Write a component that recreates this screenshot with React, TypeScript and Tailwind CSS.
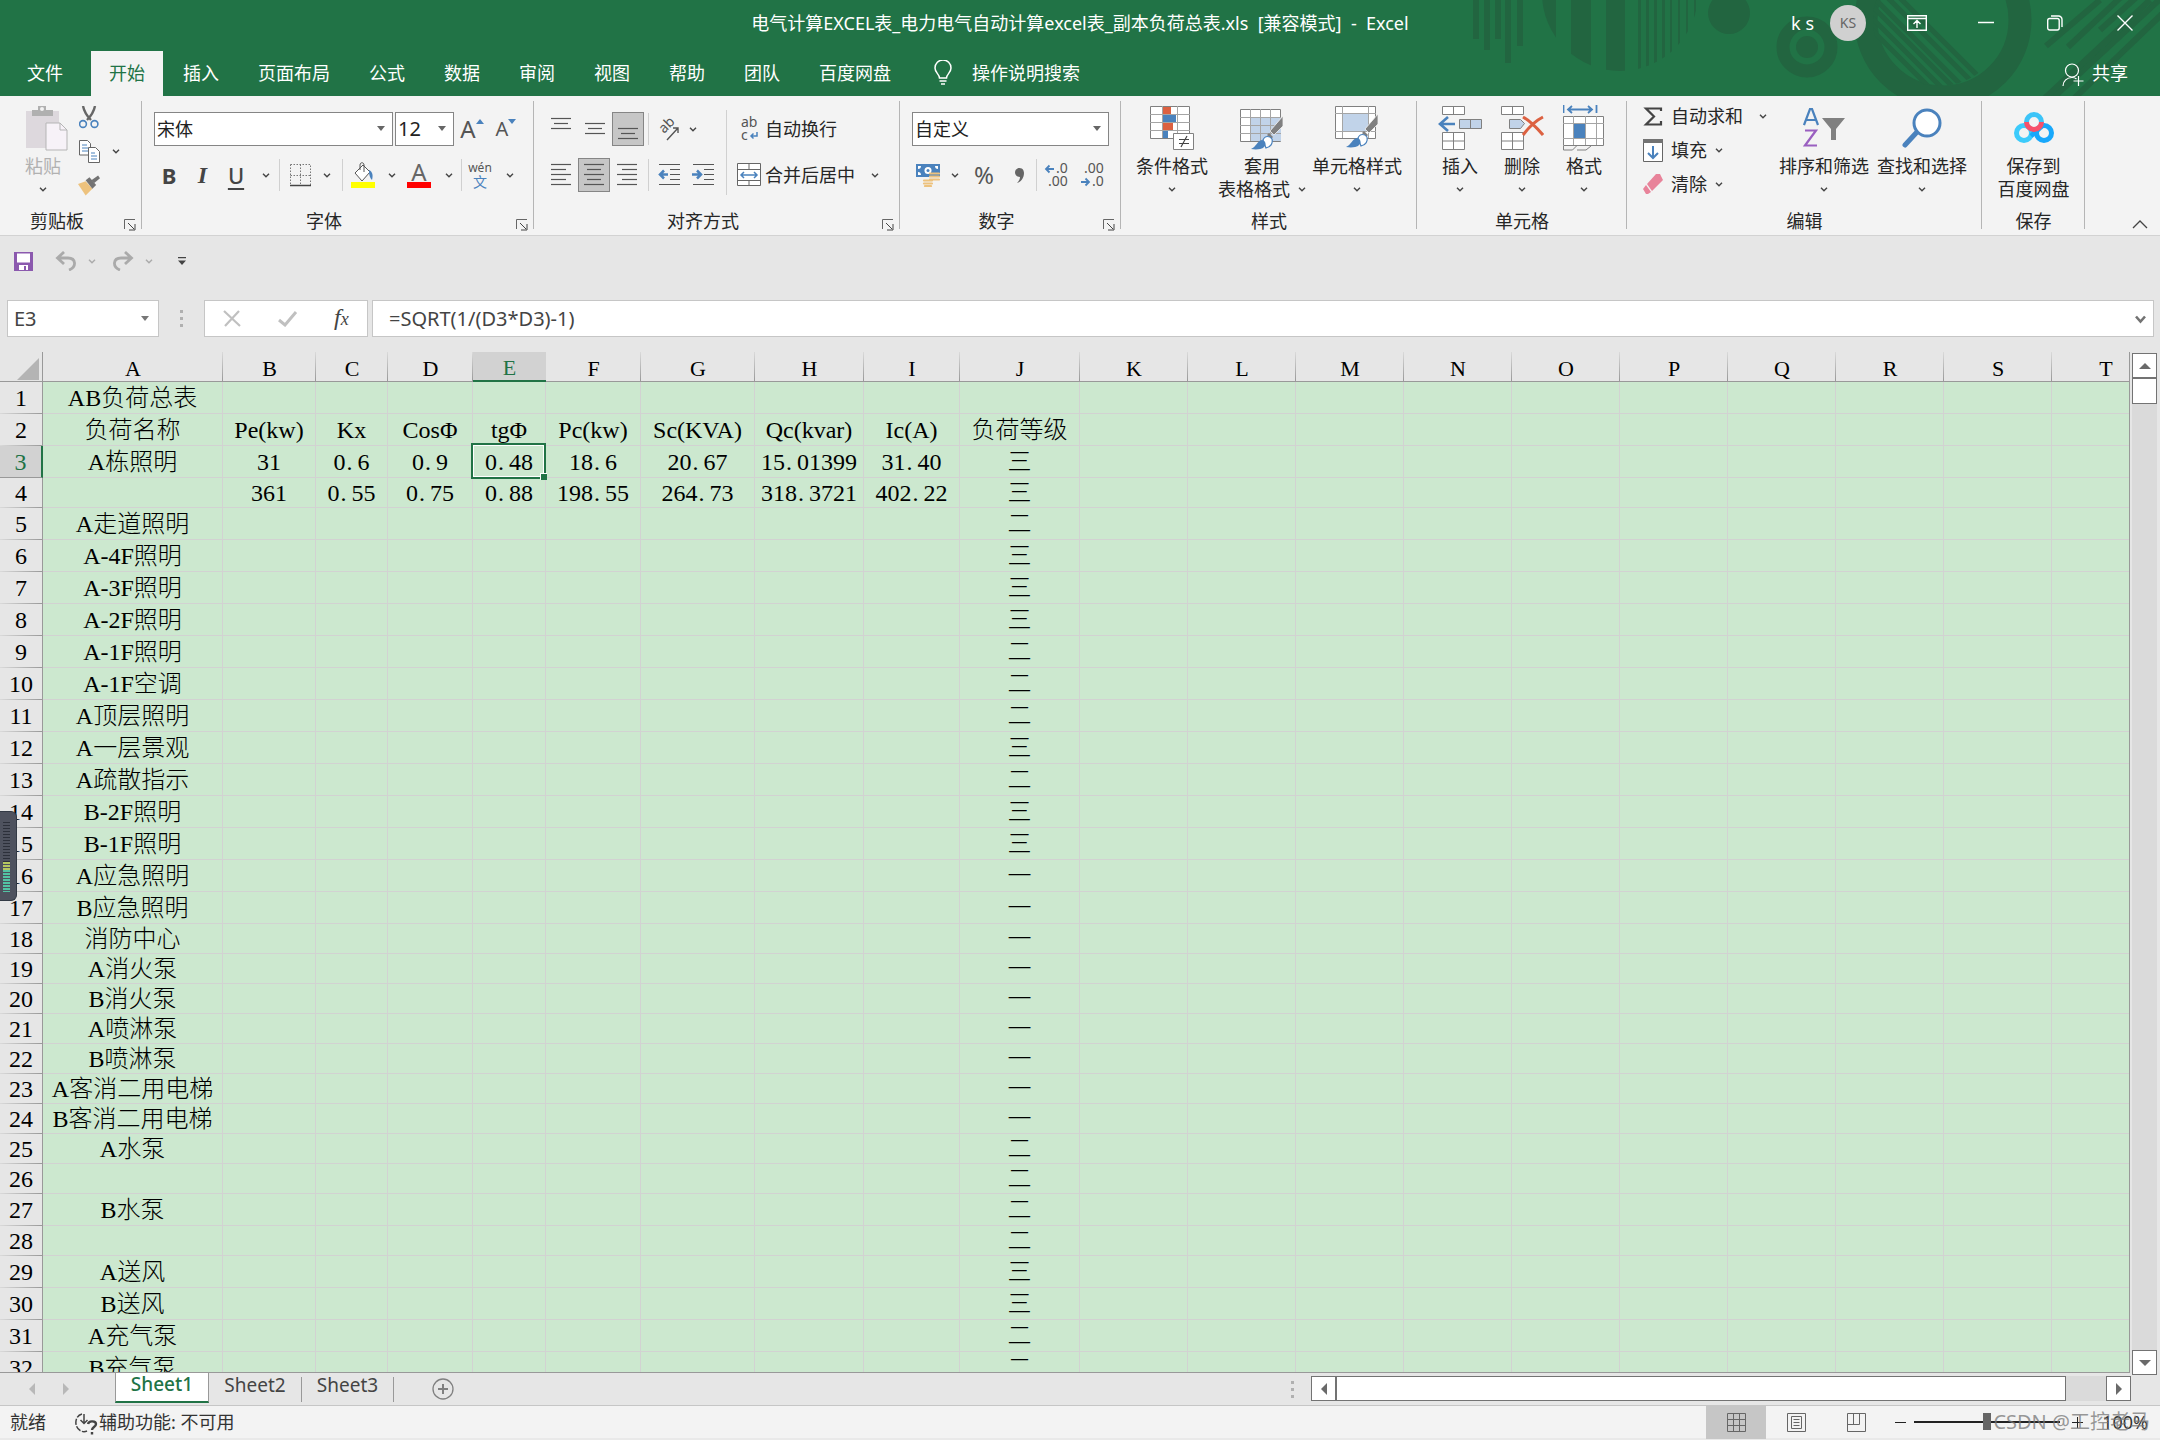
import type { ReactNode } from "react";

const tabs = ["插入", "页面布局", "公式", "数据", "审阅", "视图", "帮助", "团队", "百度网盘"];

const columns = [
  { name: "A", width: 180 },
  { name: "B", width: 93 },
  { name: "C", width: 72 },
  { name: "D", width: 85 },
  { name: "E", width: 73 },
  { name: "F", width: 95 },
  { name: "G", width: 114 },
  { name: "H", width: 109 },
  { name: "I", width: 96 },
  { name: "J", width: 120 },
  ...["K", "L", "M", "N", "O", "P", "Q", "R", "S", "T"].map((name) => ({ name, width: 108 })),
];

type Row = { name: string; values?: string[]; level?: string; short?: boolean };

const rows: Row[] = [
  { name: "AB负荷总表" },
  { name: "负荷名称", values: ["Pe(kw)", "Kx", "CosΦ", "tgΦ", "Pc(kw)", "Sc(KVA)", "Qc(kvar)", "Ic(A)"], level: "负荷等级" },
  { name: "A栋照明", values: ["31", "0.6", "0.9", "0.48", "18.6", "20.67", "15.01399", "31.40"], level: "三" },
  { name: "", values: ["361", "0.55", "0.75", "0.88", "198.55", "264.73", "318.3721", "402.22"], level: "三", short: true },
  { name: "A走道照明", level: "二" },
  { name: "A-4F照明", level: "三" },
  { name: "A-3F照明", level: "三" },
  { name: "A-2F照明", level: "三" },
  { name: "A-1F照明", level: "二" },
  { name: "A-1F空调", level: "二" },
  { name: "A顶层照明", level: "二" },
  { name: "A一层景观", level: "三" },
  { name: "A疏散指示", level: "二" },
  { name: "B-2F照明", level: "三" },
  { name: "B-1F照明", level: "三" },
  { name: "A应急照明", level: "一" },
  { name: "B应急照明", level: "一" },
  { name: "消防中心", level: "一", short: true },
  { name: "A消火泵", level: "一", short: true },
  { name: "B消火泵", level: "一", short: true },
  { name: "A喷淋泵", level: "一", short: true },
  { name: "B喷淋泵", level: "一", short: true },
  { name: "A客消二用电梯", level: "一", short: true },
  { name: "B客消二用电梯", level: "一", short: true },
  { name: "A水泵", level: "二", short: true },
  { name: "", level: "二", short: true },
  { name: "B水泵", level: "二" },
  { name: "", level: "二", short: true },
  { name: "A送风", level: "三" },
  { name: "B送风", level: "三" },
  { name: "A充气泵", level: "二" },
  { name: "B充气泵", level: "二" },
];

function Chevron({ className = "text-[#444]" }: { className?: string }) {
  return (
    <svg className={className} width="8" height="5" viewBox="0 0 8 5" fill="none" stroke="currentColor" strokeWidth="1.4">
      <path d="M1 .8 4 3.8 7 .8" />
    </svg>
  );
}

function Btn({ label, className, children }: { label: string; className: string; children: ReactNode }) {
  return (
    <button type="button" aria-label={label} className={`flex h-[34px] shrink-0 items-center justify-center ${className}`}>
      {children}
    </button>
  );
}

function Divider() {
  return <div className="h-8 w-px shrink-0 bg-[#d0d0d0]" />;
}

function Group({ label, className, launcher, children }: { label: string; className: string; launcher?: boolean; children: ReactNode }) {
  return (
    <section className={`relative flex shrink-0 flex-col ${className}`}>
      <div className="flex h-28 flex-col">{children}</div>
      <div className={launcher ? "flex h-[26px] items-center justify-center pr-7" : "flex h-[26px] items-center justify-center"}>
        <span>{label}</span>
        {launcher && (
          <button type="button" aria-label={`${label}设置`} className="absolute right-[6px] bottom-1">
            <svg width="12" height="12" viewBox="0 0 12 12" fill="none" stroke="#666">
              <path d="M.5 10V.5H11" />
              <path d="M4 4 10 10M11 5v6H5" stroke="#444" />
            </svg>
          </button>
        )}
      </div>
      <div className="absolute top-[5px] right-0 h-32 w-px bg-[#b5b5b5]" />
    </section>
  );
}

function BigButton({ icon, lines, className, arrow = true }: { icon: ReactNode; lines: string[]; className: string; arrow?: boolean }) {
  return (
    <button type="button" className={`flex shrink-0 flex-col items-center pt-2 ${className}`}>
      <span className="flex h-12 items-center justify-center">{icon}</span>
      <span className="mt-[2px] leading-6 whitespace-nowrap">{lines[0]}</span>
      <span className="flex h-[22px] items-center gap-2 leading-[22px] whitespace-nowrap">
        {lines[1]}
        {arrow && <Chevron />}
      </span>
    </button>
  );
}

function Picker({ label, value, className }: { label: string; value: string; className: string }) {
  return (
    <div className={`relative h-[34px] shrink-0 ${className}`}>
      <select aria-label={label} className="h-full w-full appearance-none border border-[#858585] bg-white pl-[2px] text-[#222]">
        <option>{value}</option>
      </select>
      <svg className="pointer-events-none absolute top-[14px] right-2" width="8" height="5" viewBox="0 0 8 5" fill="#666">
        <path d="M0 0h8L4 5z" />
      </svg>
    </div>
  );
}

function Lines({ rows: list }: { rows: [number, number, number][] }) {
  return (
    <svg width="22" height="24" viewBox="0 0 22 24" stroke="#555" strokeWidth="1.2">
      {list.map(([y, x1, x2]) => (
        <path key={y} d={`M${x1} ${y}.5H${x2}`} />
      ))}
    </svg>
  );
}

function Brush() {
  return (
    <g>
      <path d="M43 10v10L34 29l-4-4z" fill="#808080" stroke="#f3f3f3" strokeWidth=".8" />
      <path d="M29 27l4 4-2 2-4-4z" fill="#808080" />
      <path d="M23 34c2-5 7-4 9-1 1 4-1 8-6 9z" fill="#fff" stroke="#4a82bd" strokeWidth="1.2" />
      <path d="M11 43c5-2 6-8 11-9 4 1 5 5 1 8-2 1-6 2-12 1z" fill="#4a82bd" />
    </g>
  );
}

function TitleArt() {
  const stripes: [number, number][] = [[100, 16], [131, 20], [166, 19], [198, 3], [206, 3], [214, 3], [222, 3], [230, 2], [238, 2], [246, 2], [254, 2]];
  return (
    <svg className="absolute top-0 right-0" width="720" height="96" viewBox="0 0 720 96" fill="#226540">
      <clipPath id="disc">
        <circle cx="180" cy="-7" r="78" />
      </clipPath>
      <clipPath id="hole">
        <circle cx="499" cy="20" r="66" />
      </clipPath>
      <path d="M33 0h6v39h-6zM44 0h6v50h-6zM55 0h6v39h-6zM65 0h6v63h-6zM77 0h6v46h-6z" />
      <g clipPath="url(#disc)">
        {stripes.map(([x, w]) => (
          <rect key={x} x={x} y="0" width={w} height="80" />
        ))}
      </g>
      <circle cx="289" cy="13" r="21" />
      <circle cx="367" cy="47" r="24" fill="none" stroke="#226540" strokeWidth="13" />
      <circle cx="367" cy="47" r="11" />
      <circle cx="503" cy="20" r="77" fill="none" stroke="#226540" strokeWidth="23" />
      <g clipPath="url(#hole)" stroke="#226540" strokeWidth="5">
        <path d="M430-6 530 94M418-8 518 92M406-8 506 92M442-8 542 92M454-8 554 92M394-8 494 92" />
      </g>
      <g stroke="#226540" strokeWidth="6">
        <path d="M660 0 606 46M682-4 628 47M700-6 660 30M730-10 600 110M745-8 620 112" />
        <path d="M710 0 590 112" />
      </g>
    </svg>
  );
}

function TitleBar() {
  return (
    <div className="relative flex h-[46px] items-center text-white">
      <div className="flex-1" />
      <h1 className="whitespace-pre">电气计算EXCEL表_电力电气自动计算excel表_副本负荷总表.xls  [兼容模式]  -  Excel</h1>
      <div className="flex flex-1 items-center justify-end">
        <span className="mr-4">k s</span>
        <span className="mr-4 flex size-9 items-center justify-center rounded-full bg-[#d0d0d0] text-sm text-[#666]">KS</span>
        <Btn label="功能区显示选项" className="w-[69px]">
          <svg width="20" height="16" viewBox="0 0 20 16" fill="none" stroke="#fff" strokeWidth="1.4">
            <path d="M.7.7h18.6v14.6H.7zM.7 3.5h18.6M10 13V6M6.5 9 10 5.5 13.5 9" />
          </svg>
        </Btn>
        <Btn label="最小化" className="w-[69px]">
          <svg width="16" height="16" stroke="#fff" strokeWidth="1.5"><path d="M0 7.5h16" /></svg>
        </Btn>
        <Btn label="还原" className="w-[69px]">
          <svg width="16" height="16" viewBox="0 0 16 16" fill="none" stroke="#fff" strokeWidth="1.4">
            <rect x=".7" y="3.5" width="11.5" height="11.5" rx="2" />
            <path d="M4 1h7.5A3.5 3.5 0 0 1 15 4.5V12" />
          </svg>
        </Btn>
        <Btn label="关闭" className="w-[71px]">
          <svg width="16" height="16" stroke="#fff" strokeWidth="1.4"><path d="M.5.5l15 15M15.5.5l-15 15" /></svg>
        </Btn>
      </div>
    </div>
  );
}

function TabRow() {
  return (
    <nav className="relative flex h-[50px] pt-[5px] text-white">
      <button type="button" className="w-[91px] pb-[2px] pr-px">文件</button>
      <button type="button" className="bg-[#f3f3f3] px-[18px] pb-[2px] text-[#217346]">开始</button>
      <div className="ml-px flex gap-px">
        {tabs.map((tab) => (
          <button key={tab} type="button" className="w-max px-[19px] pb-[2px]">{tab}</button>
        ))}
      </div>
      <button type="button" className="ml-6 flex items-center gap-5 pb-[2px]">
        <svg width="18" height="25" viewBox="0 0 18 25" fill="none" stroke="#fff" strokeWidth="1.5">
          <path d="M5.5 18c0-4-4.5-5-4.5-10a8 8 0 0 1 16 0c0 5-4.5 6-4.5 10zM5.5 21h7M7 24h4" />
        </svg>
        操作说明搜索
      </button>
      <button type="button" className="mr-8 ml-auto flex items-center gap-2 pb-[2px]">
        <svg className="mt-1" width="22" height="24" viewBox="0 0 22 24" fill="none" stroke="#fff" strokeWidth="1.2">
          <circle cx="10" cy="7.5" r="6.5" />
          <path d="M1 23c0-5 4-8.5 9-8.5 2 0 3.5.5 4.5 1.5M16.5 13v10M11.5 18h10" />
        </svg>
        共享
      </button>
    </nav>
  );
}

function ClipboardGroup() {
  return (
    <Group label="剪贴板" launcher className="w-[142px]">
      <div className="flex">
        <div className="ml-[14px] text-[#b1b1b1]">
          <BigButton
            className="w-[58px]"
            lines={["粘贴"]}
            icon={
              <svg className="ml-2" width="42" height="46" viewBox="0 0 42 46">
                <path d="M0 6h33v37H0z" fill="#ddd8dd" />
                <path d="M6 5h6V1h8v4h7v6H6z" fill="#b0b0b0" />
                <circle cx="16" cy="4" r="2" fill="#f3f3f3" />
                <path d="M20 18h14l7 7v20H20z" fill="#f7f2f8" stroke="#b5b5b5" />
                <path d="M34 18v7h7" fill="none" stroke="#b5b5b5" />
              </svg>
            }
          />
        </div>
        <div className="ml-[6px] flex flex-col pt-1">
          <Btn label="剪切" className="w-[22px]">
            <svg width="20" height="23" viewBox="0 0 20 23" fill="none">
              <path d="M4 0c1 5 3 9 8 14M16 0c-1 5-3 9-8 14" stroke="#666" strokeWidth="2.4" />
              <circle cx="4" cy="18" r="3.4" stroke="#4a82bd" strokeWidth="1.6" />
              <circle cx="15.5" cy="18" r="3.4" stroke="#4a82bd" strokeWidth="1.6" />
            </svg>
          </Btn>
          <div className="flex items-center gap-3">
            <Btn label="复制" className="w-[22px]">
              <svg width="21" height="23" viewBox="0 0 21 23" fill="#fff" stroke="#666">
                <path d="M.5.5h8l3 3V15H.5z" />
                <path d="M3 5h5M3 8h6M3 11h6" stroke="#4a82bd" />
                <path d="M9.5 7.5h7l4 4v11h-11z" />
                <path d="M12 13h4M12 16h6M12 19h6" stroke="#4a82bd" />
              </svg>
            </Btn>
            <Chevron />
          </div>
          <Btn label="格式刷" className="w-[22px]">
            <svg width="23" height="21" viewBox="0 0 23 21">
              <path d="M0 9l8-3 7 8-7 7z" fill="#edc27d" />
              <path d="M8 5l4-3 7 8-4 4z" fill="#737373" />
              <path d="M14 5l7-5 2 3-6 5z" fill="#737373" />
            </svg>
          </Btn>
        </div>
      </div>
    </Group>
  );
}

function FontGroup() {
  return (
    <Group label="字体" launcher className="w-[392px]">
      <div className="flex h-[54px] items-center gap-[2px] pt-3 pl-3">
        <Picker label="字体" value="宋体" className="w-[239px]" />
        <Picker label="字号" value="12" className="w-[59px] text-xl" />
        <Btn label="增大字号" className="w-8 text-2xl text-[#555]">
          A<svg className="-mt-4" width="8" height="5" fill="#4a82bd"><path d="M0 5h8L4 0z" /></svg>
        </Btn>
        <Btn label="减小字号" className="w-8 text-xl text-[#555]">
          A<svg className="-mt-4" width="8" height="5" fill="#4a82bd"><path d="M0 0h8L4 5z" /></svg>
        </Btn>
      </div>
      <div className="flex h-[50px] items-center pl-[10px] text-[#444]">
        <Btn label="加粗" className="w-[34px] text-[22px] font-bold">B</Btn>
        <Btn label="倾斜" className="w-[33px] font-['Liberation_Serif',serif] text-2xl font-bold italic">I</Btn>
        <Btn label="下划线" className="w-[34px] text-[22px] font-medium underline underline-offset-4">U</Btn>
        <Btn label="下划线选项" className="w-[26px]"><Chevron /></Btn>
        <Divider />
        <Btn label="边框" className="w-10">
          <svg width="21" height="23" viewBox="0 0 21 23" fill="none" stroke="#777">
            <path d="M.5.5h20v21M.5.5v21M10.5.5v21M.5 11.5h20" strokeDasharray="1.5 1.5" />
            <path d="M0 21.5h21" stroke="#444" strokeWidth="1.5" />
          </svg>
        </Btn>
        <Btn label="边框选项" className="w-[22px] pr-2"><Chevron /></Btn>
        <Divider />
        <Btn label="填充颜色" className="w-10">
          <svg width="24" height="26" viewBox="0 0 24 26">
            <path d="M4 11l8-8 7 7-8 9z" fill="#fff" stroke="#555" />
            <path d="M9 8V3c0-3 4-3 4 0v7" fill="none" stroke="#555" />
            <path d="M18 8c4 2 4 6 3 10-1-1-3-3-3-10z" fill="#4a82bd" />
            <path d="M0 20h24v6H0z" fill="#ff0" />
          </svg>
        </Btn>
        <Btn label="填充颜色选项" className="w-[18px]"><Chevron /></Btn>
        <Btn label="字体颜色" className="w-9">
          <span className="flex w-6 flex-col items-center border-b-6 border-[#f00] text-2xl leading-5 text-[#666]">A</span>
        </Btn>
        <Btn label="字体颜色选项" className="w-6"><Chevron /></Btn>
        <Divider />
        <Btn label="拼音" className="w-9 flex-col">
          <span className="text-xs leading-[14px] text-[#555]">wén</span>
          <span className="text-sm leading-[14px] text-[#4a82bd]">文</span>
        </Btn>
        <Btn label="拼音选项" className="w-6"><Chevron /></Btn>
      </div>
    </Group>
  );
}

function AlignGroup() {
  return (
    <Group label="对齐方式" launcher className="w-[366px]">
      <div className="flex">
        <div>
          <div className="flex h-[54px] items-center pt-3 pl-[10px]">
            <Btn label="顶端对齐" className="w-[34px] pb-2"><Lines rows={[[5, 1, 21], [10, 4, 18], [15, 1, 21]]} /></Btn>
            <Btn label="垂直居中" className="w-[34px]"><Lines rows={[[6, 1, 21], [11, 4, 18], [16, 1, 21]]} /></Btn>
            <Btn label="底端对齐" className="w-8 border border-[#858585] bg-[#c6c6c6] pt-2"><Lines rows={[[7, 1, 21], [12, 4, 18], [17, 1, 21]]} /></Btn>
            <div className="ml-1"><Divider /></div>
            <Btn label="方向" className="w-10">
              <svg className="overflow-visible" width="22" height="24" viewBox="0 0 22 24" fill="none" stroke="#555">
                <text transform="translate(6 17) rotate(-45)" fontSize="14" fill="#555" stroke="none">ab</text>
                <path d="M9 23 20 11M20 16v-5h-5" strokeWidth="1.4" />
              </svg>
            </Btn>
            <Chevron />
          </div>
          <div className="flex h-[50px] items-center pl-[10px]">
            <Btn label="左对齐" className="w-[34px]"><Lines rows={[[1, 1, 21], [6, 1, 16], [11, 1, 21], [16, 1, 16], [21, 1, 21]]} /></Btn>
            <Btn label="居中" className="w-8 border border-[#858585] bg-[#c6c6c6]"><Lines rows={[[1, 1, 21], [6, 4, 18], [11, 1, 21], [16, 4, 18], [21, 1, 21]]} /></Btn>
            <Btn label="右对齐" className="w-[34px]"><Lines rows={[[1, 1, 21], [6, 6, 21], [11, 1, 21], [16, 6, 21], [21, 1, 21]]} /></Btn>
            <div className="ml-1"><Divider /></div>
            <Btn label="减少缩进量" className="w-[41px]">
              <svg width="23" height="24" viewBox="0 0 23 24" stroke="#555" strokeWidth="1.2">
                <path d="M1 1.5h21M12 6.5h10M12 11.5h10M12 16.5h10M1 21.5h21" />
                <path d="M10 11.5H2M6 7.5l-4 4 4 4" stroke="#4a82bd" strokeWidth="2.5" fill="none" />
              </svg>
            </Btn>
            <Btn label="增加缩进量" className="w-[26px]">
              <svg width="23" height="24" viewBox="0 0 23 24" stroke="#555" strokeWidth="1.2">
                <path d="M1 1.5h21M12 6.5h10M12 11.5h10M12 16.5h10M1 21.5h21" />
                <path d="M0 11.5h8M5 7.5l4 4-4 4" stroke="#4a82bd" strokeWidth="2.5" fill="none" />
              </svg>
            </Btn>
          </div>
        </div>
        <div className="mt-[14px] ml-[10px] h-[85px] w-px shrink-0 bg-[#d0d0d0]" />
        <div>
          <button type="button" className="flex h-[54px] items-center gap-[6px] pt-3 pl-[14px] whitespace-nowrap">
            <svg className="overflow-visible" width="18" height="28" viewBox="0 0 18 28">
              <text x="0" y="12" fontSize="14" fill="#555">ab</text>
              <text x="0" y="25" fontSize="14" fill="#555">c</text>
              <path d="M16 17v4h-6M12.5 18.5 10 21l2.5 2.5" fill="none" stroke="#4a82bd" strokeWidth="1.5" />
            </svg>
            自动换行
          </button>
          <div className="flex h-[50px] items-center">
            <button type="button" className="flex items-center gap-1 pl-[10px] whitespace-nowrap">
              <svg width="24" height="24" viewBox="0 0 24 24" fill="#fff" stroke="#666">
                <path d="M.5.5h23v22H.5zM.5 6.5h23M.5 17.5h23M12 .5v6M12 17.5v5" />
                <path d="M4 12h16M7 9l-3 3 3 3M17 9l3 3-3 3" stroke="#4a82bd" strokeWidth="1.5" fill="none" />
              </svg>
              合并后居中
            </button>
            <Btn label="合并选项" className="w-10"><Chevron /></Btn>
          </div>
        </div>
      </div>
    </Group>
  );
}

function NumberGroup() {
  return (
    <Group label="数字" launcher className="w-[221px]">
      <div className="flex h-[54px] items-center pt-3 pl-3">
        <Picker label="数字格式" value="自定义" className="w-[197px]" />
      </div>
      <div className="flex h-[50px] items-center pl-3 text-[#555]">
        <Btn label="会计数字格式" className="w-8">
          <svg width="24" height="24" viewBox="0 0 24 24">
            <path d="M0 1h24v13H0z" fill="#4a82bd" />
            <path d="M2 3h3a3 3 0 0 1-3 3zM22 3h-3a3 3 0 0 0 3 3zM2 12V9a3 3 0 0 1 3 3z" fill="#fff" />
            <circle cx="12" cy="7.5" r="3.5" fill="#fff" />
            <circle cx="12" cy="7.5" r="1.5" fill="#4a82bd" />
            <path d="M14 10.5h9M14 13.5h9M14 16.5h9M8 17.5h8M8 20.5h8M9 23h6" stroke="#edc27d" strokeWidth="2.2" strokeLinecap="round" />
          </svg>
        </Btn>
        <Btn label="会计格式选项" className="w-[22px]"><Chevron /></Btn>
        <Btn label="百分比样式" className="w-9 text-2xl">%</Btn>
        <Btn label="千位分隔样式" className="w-[34px]">
          <svg width="9" height="15" fill="#666"><path d="M4.5 0C8 0 9 3 9 5c0 5-3 9-7 10 2-2 3-4 3-6-3 0-5-2-5-4.5S2 0 4.5 0z" /></svg>
        </Btn>
        <Divider />
        <Btn label="增加小数位数" className="w-10">
          <svg className="overflow-visible" width="24" height="28" viewBox="0 0 24 28" fill="#555" fontSize="14">
            <text x="11" y="12">.0</text>
            <text x="3" y="25">.00</text>
            <path d="M9 8H1M4.5 4.5 1 8l3.5 3.5" fill="none" stroke="#4a82bd" strokeWidth="1.8" />
          </svg>
        </Btn>
        <Btn label="减少小数位数" className="w-8">
          <svg className="overflow-visible" width="24" height="28" viewBox="0 0 24 28" fill="#555" fontSize="14">
            <text x="3" y="12">.00</text>
            <text x="11" y="25">.0</text>
            <path d="M0 21h8M4.5 17.5 8 21l-3.5 3.5" fill="none" stroke="#4a82bd" strokeWidth="1.8" />
          </svg>
        </Btn>
      </div>
    </Group>
  );
}

function StylesGroup() {
  return (
    <Group label="样式" className="w-[296px]">
      <div className="flex">
        <BigButton
          className="ml-[6px] w-[90px]"
          lines={["条件格式"]}
          icon={
            <svg width="44" height="44" viewBox="0 0 44 44">
              <path d="M.5.5h39v32H.5z" fill="#fff" stroke="#808080" />
              <path d="M0 8.5h40M0 16.5h40M0 24.5h40M12.5 0v32M27.5 0v32" stroke="#a5a5a5" />
              <path d="M13 1h8v7h-8zM13 17h10v7H13z" fill="#dc6141" />
              <path d="M13 9h13v7H13zM13 25h5v7h-5z" fill="#4a82bd" />
              <path d="M23.5 27.5h20v16h-20z" fill="#fff" stroke="#808080" />
              <path d="M29 33.5h10M29 37.5h10M37 30l-6 11" stroke="#444" strokeWidth="1.2" />
            </svg>
          }
        />
        <BigButton
          className="w-[90px]"
          lines={["套用", "表格格式"]}
          icon={
            <svg width="44" height="44" viewBox="0 0 44 44">
              <path d="M.5 3.5h40v32H.5z" fill="#fff" stroke="#808080" />
              <path d="M10 12h31v23H10z" fill="#c1d3e9" />
              <path d="M0 11.5h41M0 19.5h41M0 27.5h41M10.5 3v32M20.5 3v32M30.5 3v32" stroke="#a5a5a5" />
              <Brush />
            </svg>
          }
        />
        <BigButton
          className="w-[100px]"
          lines={["单元格样式"]}
          icon={
            <svg width="44" height="44" viewBox="0 0 44 44">
              <path d="M.5.5h40v32H.5z" fill="#fff" stroke="#808080" />
              <path d="M0 7.5h41M0 25.5h41M7.5 0v32M33.5 0v32" stroke="#a5a5a5" />
              <path d="M8 8h25v17H8z" fill="#c1d3e9" />
              <g transform="translate(0 -2)"><Brush /></g>
            </svg>
          }
        />
      </div>
    </Group>
  );
}

function CellsGroup() {
  return (
    <Group label="单元格" className="w-[210px]">
      <div className="flex">
        <BigButton
          className="ml-3 w-[62px]"
          lines={["插入"]}
          icon={
            <svg width="44" height="44" viewBox="0 0 44 44" fill="#fff" stroke="#808080">
              <path d="M4.5.5h22v8h-22zM15.5.5v8M4.5 26.5h22v17h-22zM4.5 35h22M15.5 26.5v17" />
              <path d="M21.5 13.5h22v9h-22zM32.5 13.5v9" fill="#c1d3e9" />
              <path d="M17 18H2M10 11l-8 7 8 7" fill="none" stroke="#4a82bd" strokeWidth="2.6" />
            </svg>
          }
        />
        <BigButton
          className="w-[62px]"
          lines={["删除"]}
          icon={
            <svg width="44" height="44" viewBox="0 0 44 44" fill="#fff" stroke="#808080">
              <path d="M1.5.5h22v8h-22zM12.5.5v8M1.5 26.5h22v17h-22zM1.5 35h22M12.5 26.5v17" />
              <path d="M9.5 13.5h11l4 4-4 5h-11z" fill="#c1d3e9" />
              <path d="M23 11c7 4 13 10 20 18M43 11c-8 4-14 10-20 18" fill="none" stroke="#dc6141" strokeWidth="3" />
            </svg>
          }
        />
        <BigButton
          className="w-[62px]"
          lines={["格式"]}
          icon={
            <svg width="42" height="46" viewBox="0 0 42 46" fill="#fff" stroke="#808080">
              <path d="M.5 11.5h40v29H.5z" />
              <path d="M0 18.5h41M0 33.5h41M10.5 11v29M22.5 11v29M33.5 11v29" stroke="#a5a5a5" />
              <path d="M11 19h11v14H11z" fill="#4a82bd" stroke="none" />
              <path d="M.5 41v4h9l4-4M14 45h9l5-4" fill="none" />
              <path d="M.5 0v8M33.5 0v8M5 4.5h24M9 1 5 4.5 9 8M25 1l4 3.5L25 8" fill="none" stroke="#4a82bd" strokeWidth="1.8" />
            </svg>
          }
        />
      </div>
    </Group>
  );
}

function EditGroup() {
  return (
    <Group label="编辑" className="w-[355px]">
      <div className="flex">
        <div className="flex w-[146px] flex-col pt-[3px] pl-4">
          <button type="button" className="flex h-[34px] items-center gap-2">
            <svg width="20" height="19" viewBox="0 0 20 19" fill="none" stroke="#444" strokeWidth="2.2"><path d="M18 4V1.5H3L11 9.5 3 17.5h15V14" /></svg>
            自动求和
            <span className="ml-2"><Chevron /></span>
          </button>
          <button type="button" className="flex h-[34px] items-center gap-2">
            <svg width="20" height="23" viewBox="0 0 20 23" fill="#fff" stroke="#666">
              <path d="M.5.5h19v22H.5z" />
              <path d="M0 0h20v4H0z" fill="#737373" stroke="none" />
              <path d="M10 7v12M5 14l5 5 5-5" fill="none" stroke="#4a82bd" strokeWidth="2" />
            </svg>
            填充
            <Chevron />
          </button>
          <button type="button" className="flex h-[34px] items-center gap-2">
            <svg width="20" height="20" viewBox="0 0 20 20" fill="#e8839a">
              <path d="M13 0h4l3 6L9 17 4 10zM3 11l5 7-3 2H3l-3-5z" />
            </svg>
            清除
            <Chevron />
          </button>
        </div>
        <BigButton
          className="w-[102px]"
          lines={["排序和筛选"]}
          icon={
            <svg width="42" height="40" viewBox="0 0 42 40" fill="none">
              <path d="M1 17 7 1h2l6 16M3.5 12h9" stroke="#4a82bd" strokeWidth="2.2" />
              <path d="M2 22.5h11L2 37.5h12" stroke="#9a5fc0" strokeWidth="2.2" />
              <path d="M19 10h23L33 21v11h-5V21z" fill="#808080" />
            </svg>
          }
        />
        <BigButton
          className="w-[94px]"
          lines={["查找和选择"]}
          icon={
            <svg width="40" height="40" viewBox="0 0 40 40" fill="#fff" stroke="#4a82bd">
              <path d="M15 24 3 37" strokeWidth="5" strokeLinecap="round" />
              <circle cx="25" cy="15" r="13" strokeWidth="3" />
            </svg>
          }
        />
      </div>
    </Group>
  );
}

function SaveGroup() {
  return (
    <Group label="保存" className="w-[103px]">
      <BigButton
        className="w-[103px]"
        lines={["保存到", "百度网盘"]}
        arrow={false}
        icon={
          <svg width="40" height="32" viewBox="0 0 40 32" fill="none" strokeWidth="5">
            <circle cx="10" cy="21" r="7.5" stroke="#3ccbfb" />
            <circle cx="30" cy="21" r="7.5" stroke="#18a8fb" />
            <path d="M17 24 28 14" stroke="#18a8fb" />
            <path d="M12.5 10a7.5 7.5 0 0 1 15 0" stroke="#3cc4f8" />
            <path d="M27.5 10a7.5 7.5 0 0 1-15 0" stroke="#f8506a" />
          </svg>
        }
      />
    </Group>
  );
}

function QuickAccess() {
  return (
    <div className="flex h-[50px] items-center pl-[14px]">
      <button type="button" aria-label="保存">
        <svg width="19" height="19" viewBox="0 0 19 19">
          <path d="M0 0h19v19H0z" fill="#8b59ae" />
          <path d="M3 1.5h13v9H3zM5 13h9v5h-2v-4h-2v4H5z" fill="#fff" />
        </svg>
      </button>
      <button type="button" aria-label="撤消" className="ml-[22px] flex items-center gap-[11px] text-[#aaa]">
        <svg width="22" height="20" viewBox="0 0 22 20" fill="none" stroke="currentColor" strokeWidth="2.8">
          <path d="M9 1 2.5 7 9 13M2.5 7H13c8 0 9 9 1 12" />
        </svg>
        <Chevron className="text-[#aaa]" />
      </button>
      <button type="button" aria-label="恢复" className="ml-4 flex items-center gap-[11px] text-[#aaa]">
        <svg width="22" height="20" viewBox="0 0 22 20" fill="none" stroke="currentColor" strokeWidth="2.8">
          <path d="M13 1l6.5 6-6.5 6M19.5 7H9C1 7 0 16 8 19" />
        </svg>
        <Chevron className="text-[#aaa]" />
      </button>
      <button type="button" aria-label="自定义快速访问工具栏" className="ml-[25px]">
        <svg width="8" height="8" viewBox="0 0 8 8" fill="#444"><path d="M0 0h8v1.3H0zM0 3.5h8L4 8z" /></svg>
      </button>
    </div>
  );
}

function Dots() {
  return (
    <div className="flex flex-col gap-1">
      <span className="h-[3px] w-[3px] bg-[#b0b0b0]" />
      <span className="h-[3px] w-[3px] bg-[#b0b0b0]" />
      <span className="h-[3px] w-[3px] bg-[#b0b0b0]" />
    </div>
  );
}

function FormulaBar() {
  return (
    <div className="mt-[14px] flex h-[37px] pr-[6px] pl-[7px] text-xl text-[#444]">
      <div className="relative w-[152px]">
        <input aria-label="名称框" defaultValue="E3" className="h-full w-full border border-[#c6c6c6] bg-white pl-[6px]" />
        <svg className="absolute top-4 right-[10px]" width="8" height="5" fill="#777"><path d="M0 0h8L4 5z" /></svg>
      </div>
      <div className="flex w-[45px] items-center justify-center"><Dots /></div>
      <div className="flex w-[164px] items-center justify-around border border-[#c6c6c6] bg-white">
        <button type="button" aria-label="取消">
          <svg width="18" height="17" stroke="#c0c0c0" strokeWidth="2.2"><path d="M1 1l16 15M16 1 2 16" /></svg>
        </button>
        <button type="button" aria-label="输入">
          <svg width="20" height="16" fill="none" stroke="#c0c0c0" strokeWidth="3"><path d="M1 9l6 5L18 1" /></svg>
        </button>
        <button type="button" aria-label="插入函数" className="font-['Liberation_Serif',serif] text-2xl leading-6 italic">
          f<span className="text-lg">x</span>
        </button>
      </div>
      <div className="relative ml-1 flex-1">
        <input aria-label="编辑栏" defaultValue="=SQRT(1/(D3*D3)-1)" className="h-full w-full border border-[#c6c6c6] bg-white pl-4" />
        <svg className="absolute top-[15px] right-2" width="11" height="9" fill="none" stroke="#737373" strokeWidth="2.6"><path d="M1 1.5l4.5 5 4.5-5" /></svg>
      </div>
    </div>
  );
}

// the sheet font gives a full digit's width to the decimal point
function Value({ text }: { text: string }) {
  const [whole, fraction] = text.split(".");
  if (!fraction) return <>{text}</>;
  return (
    <>
      {whole}
      <span className="inline-block w-3 pl-px text-left">.</span>
      {fraction}
    </>
  );
}

function Sheet() {
  return (
    <div className="relative min-w-0 flex-1 overflow-hidden border-r border-b border-[#999] font-['Liberation_Serif','Noto_Sans_CJK_SC',serif] text-2xl leading-6 font-light text-black">
      <table className="w-max table-fixed border-separate border-spacing-0 text-center">
        <colgroup>
          <col className="w-[43px]" />
          {columns.map((col) => (
            <col key={col.name} style={{ width: col.width }} />
          ))}
        </colgroup>
        <thead>
          <tr className="h-[30px] bg-[#e6e6e6]">
            <th className="border-r border-b border-[#999] p-0">
              <svg className="mt-1 mr-[3px] ml-auto" width="22" height="22" fill="#b4b4b4"><path d="M22 0v22H0z" /></svg>
            </th>
            {columns.map((col) => (
              <th
                key={col.name}
                className={
                  col.name === "E"
                    ? "border-b-2 border-[#217346] bg-[#d2d2d2] p-0 pt-1 text-[22px] font-normal text-[#217346]"
                    : "border-b border-[#999] bg-[linear-gradient(#dadada,#999)] bg-[length:1px_100%] bg-right bg-no-repeat p-0 pt-1 text-[22px] font-normal"
                }
              >
                {col.name}
              </th>
            ))}
          </tr>
        </thead>
        <tbody>
          {rows.map((row, i) => (
            <tr key={i} className={row.short ? "h-[30px]" : "h-8"}>
              <th
                className={
                  i === 2
                    ? "border-r-2 border-b border-r-[#217346] border-b-[#999] bg-[#d2d2d2] p-0 font-normal text-[#217346]"
                    : "border-r border-[#999] bg-[#e6e6e6] bg-[linear-gradient(90deg,#dadada,#999)] bg-[length:100%_1px] bg-bottom bg-no-repeat p-0 font-normal"
                }
              >
                {i + 1}
              </th>
              <td className="border-r border-b border-[#d2d2d2] bg-[#cce8cf] p-0 whitespace-nowrap">{row.name}</td>
              {columns.slice(1).map((col, c) => (
                <td key={col.name} className="relative border-r border-b border-[#d2d2d2] bg-[#cce8cf] p-0">
                  {col.name === "J" ? row.level : <Value text={row.values?.[c] ?? ""} />}
                  {i === 2 && col.name === "E" && (
                    <div className="absolute -top-[3px] -right-px -bottom-[2px] -left-[2px] z-10 border-2 border-[#217346]">
                      <div className="h-full w-full border border-white" />
                      <div className="absolute -right-[3px] -bottom-[3px] size-[7px] border-t border-l border-white bg-[#217346]" />
                    </div>
                  )}
                </td>
              ))}
            </tr>
          ))}
        </tbody>
      </table>
    </div>
  );
}

function Arrow({ d, fill = "#6a6a6a" }: { d: string; fill?: string }) {
  return <svg width="12" height="12" viewBox="0 0 12 12" fill={fill}><path d={d} /></svg>;
}

function SheetTabs() {
  return (
    <div className="flex h-[33px] shrink-0 border-b border-[#c6c6c6] text-[19px] text-[#444]">
      <div className="flex w-[115px] items-center gap-[22px] pl-[26px]">
        <button type="button" aria-label="上一张"><Arrow d="M9 0v12L3 6z" fill="#b8b8b8" /></button>
        <button type="button" aria-label="下一张"><Arrow d="M3 0v12l6-6z" fill="#b8b8b8" /></button>
      </div>
      <button type="button" className="-mt-px h-[31px] w-[94px] border-x border-b-2 border-x-[#999] border-b-[#217346] bg-white pb-[6px] leading-5 font-medium text-[#217346]">Sheet1</button>
      <button type="button" className="mt-1 h-[25px] w-[93px] border-r border-[#999] pb-[10px] leading-4">Sheet2</button>
      <button type="button" className="mt-1 h-[25px] w-[92px] border-r border-[#999] pb-[10px] leading-4">Sheet3</button>
      <button type="button" aria-label="新工作表" className="ml-[38px]">
        <svg width="22" height="22" fill="none" stroke="#808080" strokeWidth="1.3">
          <circle cx="11" cy="11" r="10" />
          <path d="M11 6v10M6 11h10" strokeWidth="2" />
        </svg>
      </button>
      <div className="mr-[17px] ml-auto flex items-center"><Dots /></div>
      <div className="mt-[3px] mr-[29px] flex h-[25px] w-[820px] bg-[#dadada]">
        <button type="button" aria-label="向左滚动" className="flex w-[25px] items-center justify-center border border-[#737373] bg-white"><Arrow d="M9 0v12L3 6z" /></button>
        <div className="w-[730px] border border-[#737373] bg-white" />
        <button type="button" aria-label="向右滚动" className="ml-auto flex w-[25px] items-center justify-center border border-[#737373] bg-white"><Arrow d="M3 0v12l6-6z" /></button>
      </div>
    </div>
  );
}

function StatusBar() {
  return (
    <footer className="relative flex h-[34px] shrink-0 items-center border-b-2 border-[#e9e9e9] bg-[#f3f3f3] pl-[10px] text-[#333]">
      <span>就绪</span>
      <svg className="mt-1 ml-[29px]" width="24" height="22" viewBox="0 0 24 22" fill="none" stroke="#444" strokeWidth="1.5">
        <path d="M7 1C-1 3-1 15 6 18c2 1 4 1 6 0" strokeDasharray="6 1.5" />
        <path d="M9 1v9M5.5 7 9 10.5 12.5 7" />
        <path d="M13 11c1-4 8-3 8 0s-4 3-4 6M17 19v2.5" strokeWidth="2.4" />
      </svg>
      <span>辅助功能: 不可用</span>
      <div className="ml-auto flex h-full items-center">
        <Btn label="普通" className="w-[60px] bg-[#c6c6c6]">
          <svg width="19" height="19" fill="none" stroke="#666"><path d="M.5.5h18v18H.5zM.5 6.5h18M.5 12.5h18M6.5.5v18M12.5.5v18" /></svg>
        </Btn>
        <Btn label="页面布局" className="w-[60px]">
          <svg width="19" height="19" fill="none" stroke="#666"><path d="M.5.5h18v18H.5zM4.5 3.5h10v12h-10zM6.5 6.5h6M6.5 9.5h6M6.5 12.5h6" /></svg>
        </Btn>
        <Btn label="分页预览" className="w-[60px]">
          <svg width="19" height="19" fill="none" stroke="#666"><path d="M.5.5h18v18H.5zM.5 11.5h12M6.5.5v11M12.5.5v11" /></svg>
        </Btn>
        <Btn label="缩小" className="w-[28px]"><span className="h-px w-[11px] bg-[#222]" /></Btn>
        <input
          type="range"
          aria-label="显示比例"
          defaultValue={50}
          className="h-5 w-[146px] appearance-none bg-transparent [&::-webkit-slider-runnable-track]:h-[2px] [&::-webkit-slider-runnable-track]:bg-[#222] [&::-webkit-slider-thumb]:-mt-[8px] [&::-webkit-slider-thumb]:h-[17px] [&::-webkit-slider-thumb]:w-2 [&::-webkit-slider-thumb]:appearance-none [&::-webkit-slider-thumb]:bg-[#666]"
        />
        <Btn label="放大" className="w-[34px]">
          <svg width="11" height="11" stroke="#222"><path d="M0 5.5h11M5.5 0v11" /></svg>
        </Btn>
        <span className="mr-3 ml-2">100%</span>
      </div>
      <span className="pointer-events-none absolute right-[10px] text-xl text-[#777]/75">CSDN @工控老马</span>
    </footer>
  );
}

function RecorderHandle() {
  return (
    <div className="absolute top-[811px] left-0 flex h-[90px] w-[17px] flex-col items-center rounded-r-md border border-l-0 border-[#333a45] bg-[#4e525e] pt-[10px] pr-1">
      <div className="h-10 w-[7px] bg-[repeating-linear-gradient(#2c303a_0_1px,transparent_1px_3px)]" />
      <div className="h-2 w-[7px] bg-[repeating-linear-gradient(#b4c860_0_2px,transparent_2px_3px)]" />
      <div className="h-[22px] w-[7px] bg-[repeating-linear-gradient(#52c4a4_0_2px,transparent_2px_3px)]" />
    </div>
  );
}

export default function App() {
  return (
    <div className="relative flex h-screen flex-col overflow-hidden bg-[#e6e6e6] font-['Noto_Sans','Noto_Sans_CJK_SC',sans-serif] text-lg leading-6 text-[#262626]">
      <header className="relative shrink-0 bg-[#217346]">
        <TitleArt />
        <TitleBar />
        <TabRow />
      </header>
      <div className="flex h-[140px] shrink-0 border-b border-[#d2d2d2] bg-[#f3f3f3]">
        <ClipboardGroup />
        <FontGroup />
        <AlignGroup />
        <NumberGroup />
        <StylesGroup />
        <CellsGroup />
        <EditGroup />
        <SaveGroup />
        <button type="button" aria-label="折叠功能区" className="mt-auto mr-3 mb-[6px] ml-auto">
          <svg width="16" height="9" fill="none" stroke="#444" strokeWidth="1.3"><path d="M1 8l7-7 7 7" /></svg>
        </button>
      </div>
      <QuickAccess />
      <FormulaBar />
      <main className="mt-[15px] flex min-h-0 flex-1">
        <Sheet />
        <div className="mt-px mr-[3px] -mb-[2px] ml-[2px] flex w-[25px] flex-col bg-[#dadada]">
          <button type="button" aria-label="向上滚动" className="flex h-[25px] items-center justify-center border border-[#737373] bg-white"><Arrow d="M0 9h12L6 3z" /></button>
          <div className="h-[26px] border border-[#737373] bg-white" />
          <button type="button" aria-label="向下滚动" className="mt-auto flex h-[25px] items-center justify-center border border-[#737373] bg-white"><Arrow d="M0 3h12L6 9z" /></button>
        </div>
      </main>
      <SheetTabs />
      <StatusBar />
      <RecorderHandle />
    </div>
  );
}
